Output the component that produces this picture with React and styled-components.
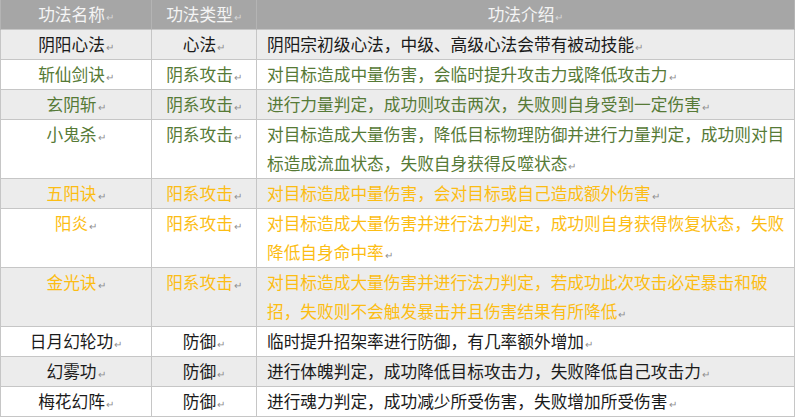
import React from "react";
import styled, { createGlobalStyle } from "styled-components";

const GlobalStyle = createGlobalStyle`
  html, body {
    margin: 0;
    padding: 0;
    background: #fff;
  }
  body {
    font-family: "Noto Sans CJK SC", "Noto Sans", sans-serif;
  }
`;

const tones = {
  plain: "#1a1a1a",
  yin: "#567a36",
  yang: "#fcbd14",
};

const Table = styled.table`
  width: 794px;
  table-layout: fixed;
  border-collapse: collapse;
  font-size: 16.7px;
  line-height: 29px;
`;

const HeadRow = styled.tr`
  background: #a6a6a6;
`;

const HeadCell = styled.th`
  font-weight: normal;
  color: #f4f4f4;
  text-align: center;
  padding: 0;
  border-left: 1px solid #b4b4b4;
  border-right: 1px solid #b4b4b4;
  white-space: nowrap;
`;

const Row = styled.tr`
  background: ${(p) => (p.$shade ? "#ececec" : "#ffffff")};
`;

const Cell = styled.td`
  border: 1px solid #c6c6c6;
  vertical-align: top;
  color: ${(p) => tones[p.$tone]};
  text-align: ${(p) => (p.$left ? "left" : "center")};
  padding: ${(p) => (p.$left ? "0 6px 0 10px" : "0")};
`;

const Mark = styled.span`
  font-size: 10px;
  line-height: 1;
  color: ${(p) => (p.$light ? "#d8d8d8" : "#8f8f8f")};
  margin-left: 1px;
`;

const rows = [
  ["阴阳心法", "心法", "阴阳宗初级心法，中级、高级心法会带有被动技能", "plain"],
  ["斩仙剑诀", "阴系攻击", "对目标造成中量伤害，会临时提升攻击力或降低攻击力", "yin"],
  ["玄阴斩", "阴系攻击", "进行力量判定，成功则攻击两次，失败则自身受到一定伤害", "yin"],
  ["小鬼杀", "阴系攻击", "对目标造成大量伤害，降低目标物理防御并进行力量判定，成功则对目标造成流血状态，失败自身获得反噬状态", "yin"],
  ["五阳诀", "阳系攻击", "对目标造成中量伤害，会对目标或自己造成额外伤害", "yang"],
  ["阳炎", "阳系攻击", "对目标造成大量伤害并进行法力判定，成功则自身获得恢复状态，失败降低自身命中率", "yang"],
  ["金光诀", "阳系攻击", "对目标造成大量伤害并进行法力判定，若成功此次攻击必定暴击和破招，失败则不会触发暴击并且伤害结果有所降低", "yang"],
  ["日月幻轮功", "防御", "临时提升招架率进行防御，有几率额外增加", "plain"],
  ["幻雾功", "防御", "进行体魄判定，成功降低目标攻击力，失败降低自己攻击力", "plain"],
  ["梅花幻阵", "防御", "进行魂力判定，成功减少所受伤害，失败增加所受伤害", "plain"],
];

const Text = ({ children, light }) => (
  <>
    {children}
    <Mark $light={light}>↵</Mark>
  </>
);

export default function App() {
  return (
    <>
      <GlobalStyle />
      <Table>
        <colgroup>
          <col style={{ width: 151 }} />
          <col style={{ width: 105 }} />
          <col style={{ width: 538 }} />
        </colgroup>
        <thead>
          <HeadRow>
            <HeadCell><Text light>功法名称</Text></HeadCell>
            <HeadCell><Text light>功法类型</Text></HeadCell>
            <HeadCell><Text light>功法介绍</Text></HeadCell>
          </HeadRow>
        </thead>
        <tbody>
          {rows.map(([name, kind, desc, tone], i) => (
            <Row key={name} $shade={i % 2 === 0}>
              <Cell $tone={tone}><Text>{name}</Text></Cell>
              <Cell $tone={tone}><Text>{kind}</Text></Cell>
              <Cell $tone={tone} $left><Text>{desc}</Text></Cell>
            </Row>
          ))}
        </tbody>
      </Table>
    </>
  );
}
